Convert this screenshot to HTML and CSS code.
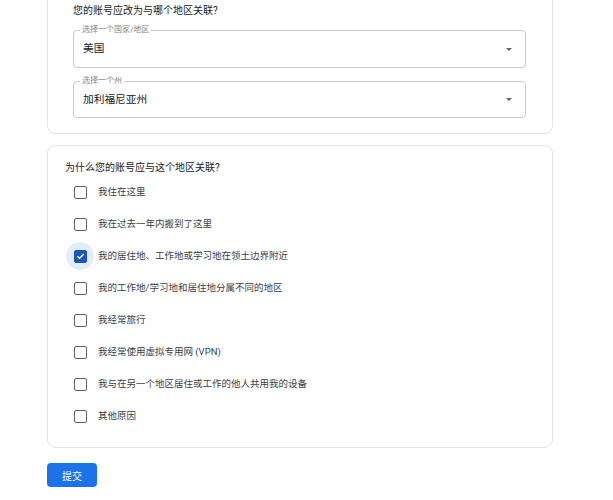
FILE: index.html
```html
<!DOCTYPE html>
<html lang="zh-CN">
<head>
<meta charset="utf-8">
<link rel="stylesheet" href="styles.css">
</head>
<body>
<div class="page">
  <section class="card card-region">
    <h2 class="heading">您的账号应改为与哪个地区关联?</h2>
    <div class="select">
      <span class="float-label">选择一个国家/地区</span>
      <span class="value">美国</span>
      <span class="arrow"></span>
    </div>
    <div class="select">
      <span class="float-label">选择一个州</span>
      <span class="value">加利福尼亚州</span>
      <span class="arrow"></span>
    </div>
  </section>

  <section class="card card-reason">
    <h2 class="heading">为什么您的账号应与这个地区关联?</h2>
    <ul class="options">
      <li class="option"><span class="cb-wrap"><span class="cb"></span></span><span class="label">我住在这里</span></li>
      <li class="option"><span class="cb-wrap"><span class="cb"></span></span><span class="label">我在过去一年内搬到了这里</span></li>
      <li class="option"><span class="cb-wrap focused"><span class="cb checked"><svg viewBox="0 0 12 12" width="12" height="12"><path d="M2.6 6.2 L5 8.5 L9.6 3.8" fill="none" stroke="#fff" stroke-width="1.5"/></svg></span></span><span class="label">我的居住地、工作地或学习地在领土边界附近</span></li>
      <li class="option"><span class="cb-wrap"><span class="cb"></span></span><span class="label">我的工作地/学习地和居住地分属不同的地区</span></li>
      <li class="option"><span class="cb-wrap"><span class="cb"></span></span><span class="label">我经常旅行</span></li>
      <li class="option"><span class="cb-wrap"><span class="cb"></span></span><span class="label">我经常使用虚拟专用网 (VPN)</span></li>
      <li class="option"><span class="cb-wrap"><span class="cb"></span></span><span class="label">我与在另一个地区居住或工作的他人共用我的设备</span></li>
      <li class="option"><span class="cb-wrap"><span class="cb"></span></span><span class="label">其他原因</span></li>
    </ul>
  </section>

  <button class="submit" type="button">提交</button>
</div>
</body>
</html>
```

FILE: styles.css
```css
* { box-sizing: border-box; }

html, body {
  margin: 0;
  padding: 0;
  background: #fff;
  overflow: hidden;
}

body {
  font-family: Roboto, "Noto Sans CJK SC", sans-serif;
  color: #202124;
}

.page {
  width: 506px;
  margin-left: 47px;
  display: flex;
  flex-direction: column;
  align-items: flex-start;
}

.card {
  width: 506px;
  border: 1px solid #e3e3e3;
  border-radius: 8px;
  background: #fff;
}

.card-region {
  margin-top: -15px;
  padding: 18px 26px 15px 25px;
  display: flex;
  flex-direction: column;
}

.heading {
  margin: 0;
  font-size: 10px;
  line-height: 14px;
  font-weight: 400;
  color: #202124;
}

.card-region .heading {
  margin-bottom: 12px;
}

.select {
  position: relative;
  height: 38px;
  border: 1px solid #c8c8c8;
  border-radius: 4px;
  display: flex;
  align-items: center;
  justify-content: space-between;
  padding: 0 13px 0 9px;
}

.select + .select {
  margin-top: 13px;
  height: 37px;
}

.float-label {
  position: absolute;
  top: -6px;
  left: 6px;
  padding: 0 2px;
  background: #fff;
  font-size: 8px;
  line-height: 10px;
  color: #80868b;
}

.value {
  font-size: 10.7px;
  line-height: 14px;
  color: #202124;
}

.arrow {
  width: 0;
  height: 0;
  border-left: 3px solid transparent;
  border-right: 3px solid transparent;
  border-top: 3px solid #5f6368;
}

.card-reason {
  margin-top: 11px;
  padding: 15px 17px 15px 17px;
}

.options {
  list-style: none;
  margin: 1px 0 0;
  padding: 0;
}

.option {
  height: 32px;
  display: flex;
  align-items: center;
}

.cb-wrap {
  width: 30px;
  height: 30px;
  display: flex;
  align-items: center;
  justify-content: center;
  border-radius: 50%;
}

.cb-wrap.focused {
  background: radial-gradient(circle, #e3ecfb 0 13.5px, transparent 14px);
}

.cb {
  width: 13px;
  height: 13px;
  border: 1.6px solid #5f6368;
  border-radius: 2px;
  display: flex;
  align-items: center;
  justify-content: center;
}

.cb.checked {
  background: #1a56b8;
  border-color: #1a56b8;
}

.cb svg {
  display: block;
}

.label {
  margin-left: 3px;
  font-size: 9.5px;
  line-height: 14px;
  color: #3c4043;
}

.submit {
  margin-top: 15px;
  width: 50px;
  height: 24px;
  border: none;
  border-radius: 4px;
  background: #1a73e8;
  color: #fff;
  font-family: Roboto, "Noto Sans CJK SC", sans-serif;
  font-size: 10px;
  padding: 0;
}
```
